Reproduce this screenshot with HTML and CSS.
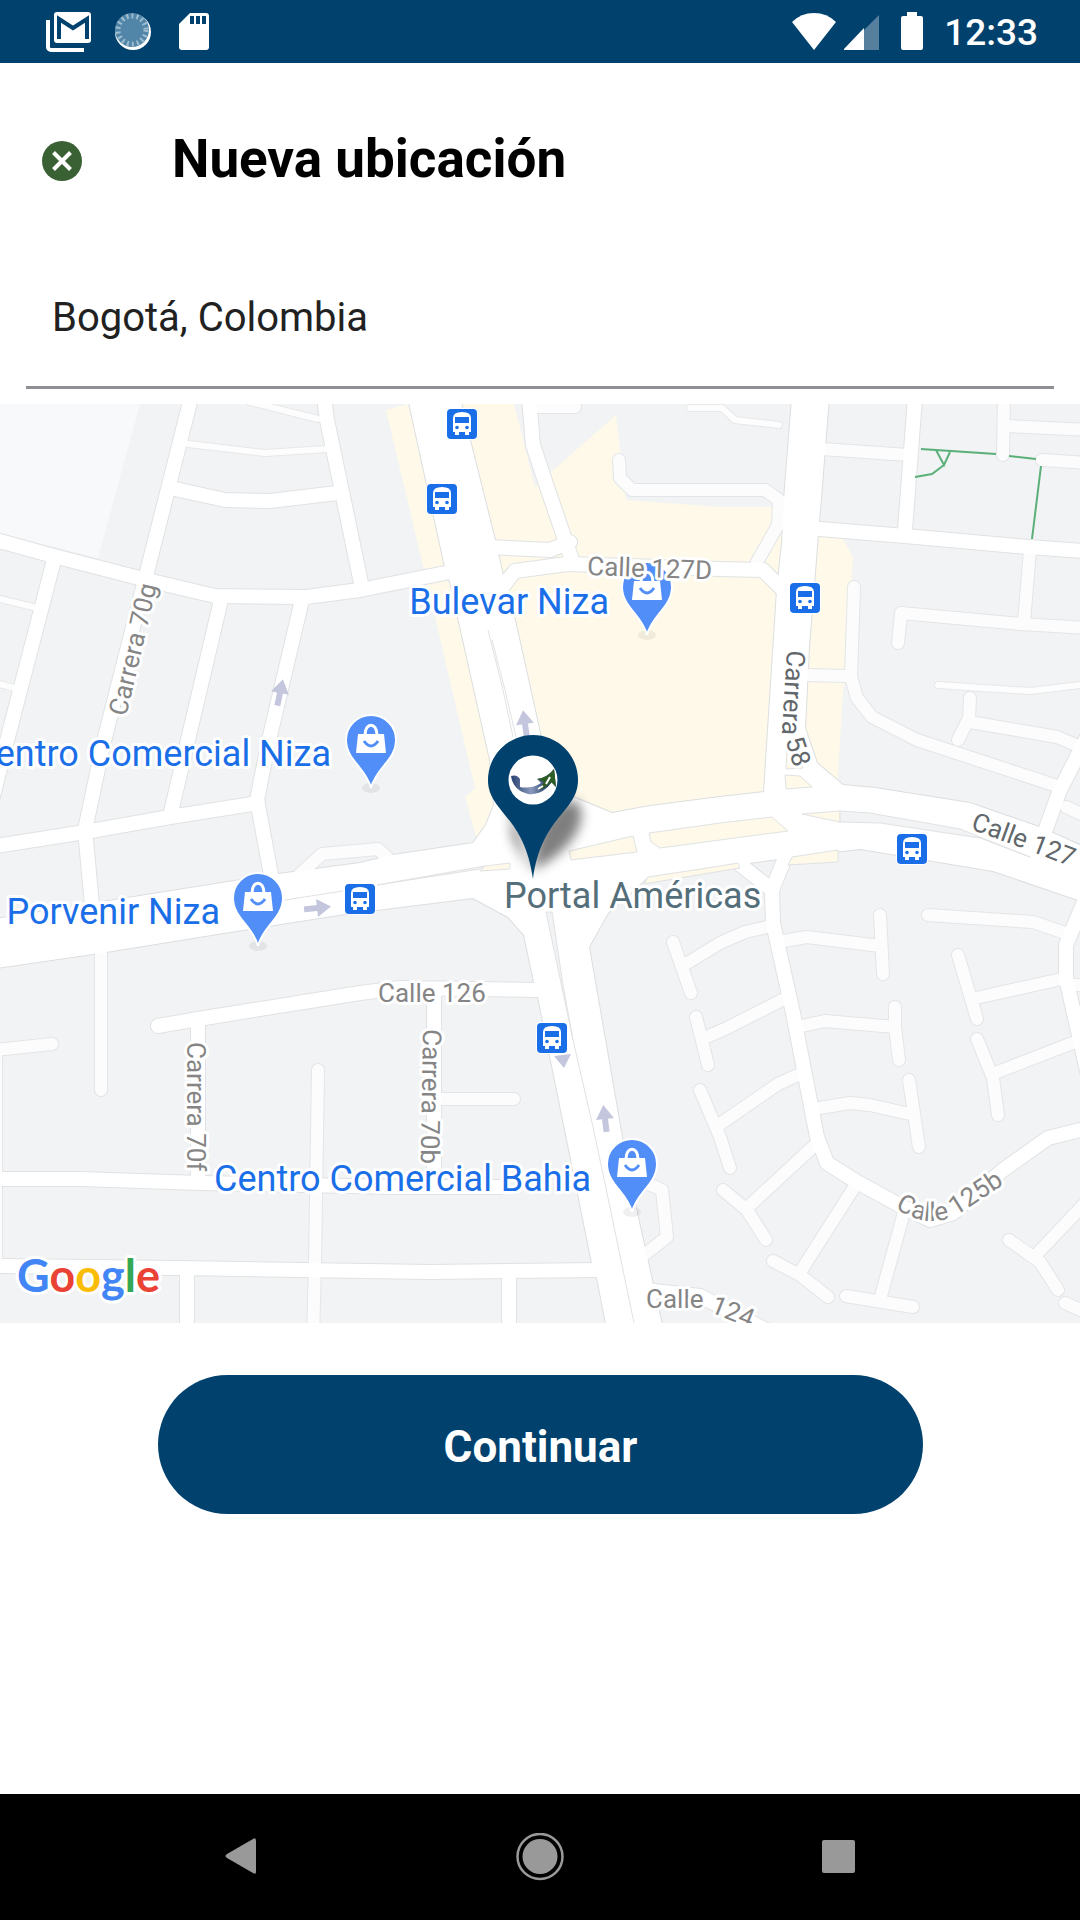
FILE: index.html
```
<!DOCTYPE html>
<html lang="es">
<head>
<meta charset="utf-8">
<meta name="viewport" content="width=device-width, initial-scale=1">
<title>Nueva ubicación</title>
<link rel="stylesheet" href="styles.css">
</head>
<body>
<div class="screen">
  <div class="status-bar">
    <div class="status-group status-left">
      <svg width="46" height="40" viewBox="0 0 46 40" aria-hidden="true">
        <path d="M2 8v27a3 3 0 0 0 3 3h33" fill="none" stroke="#fff" stroke-width="4"/>
        <rect x="8" y="0" width="37" height="31" rx="3" fill="#fff"/>
        <path d="M13 27V7l14 9 14-9v20" fill="none" stroke="#00416d" stroke-width="4"/>
      </svg>
      <svg width="40" height="40" viewBox="3 0 40 40" aria-hidden="true">
        <circle cx="21" cy="20" r="18" fill="#fff"/>
        <circle cx="20" cy="18" r="17" fill="#5286a8"/>
        <circle cx="20" cy="18" r="14" fill="none" stroke="#9dbccf" stroke-width="5" stroke-dasharray="2 3"/>
      </svg>
      <svg width="32" height="40" viewBox="0 0 32 40" aria-hidden="true">
        <path d="M12 1h16a3 3 0 0 1 3 3v31a3 3 0 0 1-3 3H4a3 3 0 0 1-3-3V12z" fill="#fff"/>
        <path d="M14 4v8M20 4v8M26 4v8" stroke="#00416d" stroke-width="4"/>
      </svg>
    </div>
    <div class="status-group status-right">
      <svg width="44" height="40" viewBox="0 0 44 40" aria-hidden="true">
        <path d="M22 38 0 10Q9 1 22 1T44 10z" fill="#fff"/>
      </svg>
      <svg class="signal" width="36" height="40" viewBox="0 0 36 40" aria-hidden="true">
        <path d="M35 3v35H0z" fill="#567f9d"/>
        <path d="M20 16v22H0v-1z" fill="#fff"/>
      </svg>
      <svg width="24" height="40" viewBox="0 0 24 40" aria-hidden="true">
        <path d="M7 0h10v4h4q2 0 2 2v30q0 2-2 2H3q-2 0-2-2V6q0-2 2-2h4z" fill="#fff"/>
      </svg>
      <span class="clock">12:33</span>
    </div>
  </div>

  <header class="header">
    <button class="close" type="button" aria-label="Cerrar">
      <svg width="40" height="40" viewBox="0 0 40 40" aria-hidden="true">
        <circle cx="20" cy="20" r="20" fill="#3a6133"/>
        <path d="M11.500 11.500 28.500 28.500M28.500 11.500 11.500 28.500" stroke="#fff" stroke-width="4"/>
      </svg>
    </button>
    <h1 class="title">Nueva ubicación</h1>
  </header>

  <main>
    <div class="field">
      <input class="place" type="text" value="Bogotá, Colombia" aria-label="Ubicación">
    </div>

    <svg class="map" viewBox="0 404 1080 919" role="img" aria-label="Mapa">
      <defs>
        <g id="wide">
          <path d="M408 398 445 567 450 582 490 760 494 805 486 825 473 843 393 855 360 863 278 874-4 919V968L100 953 230 932 345 914 473 898 508 917 524 935 534 982 538 997 592 1263 597 1278 607 1329H663L637 1213 622 1137 589 947 608 913 648 877 720 867 792 857 860 849 897 855 933 861 993 871 1084 902V847L1053 833 1042 828 970 803 875 788 843 785 817 763 805 728 809 647 829 398H792L784 500 782 543 777 590 764 792 720 797 650 806 612 813 573 797 548 770 540 733 515 620 507 593 495 540 470 440 460 398z"/>
        </g>
        <g id="street">
          <path d="M191 398 145 580 103 745 85 830 92 905"/>
          <path d="M-4 540 50 555 147 580 215 596 306 597 360 590 450 572"/>
          <path d="M175 489 225 500 270 501 337 493"/>
          <path d="M324 398 327 420 341 487 361 583"/>
          <path d="M54 560 22 683 9 733-8 800"/>
          <path d="M221 600 171 812M302 600 269 740 257 800 272 880"/>
          <path d="M-4 846 85 832 170 817 258 803"/>
          <path d="M529 398 533 445 548 490 572 560"/>
          <path d="M490 547 550 550 570 542M500 590 515 571 567 564 720 569 763 570 785 592"/>
          <path d="M820 529 905 536 1028 547 1084 551"/>
          <path d="M915 398 905 530M1088 735 1060 790 1044 834"/>
          <path d="M158 1026 198 1019 360 993 400 988 540 990M198 1020V1182"/>
          <path d="M-4 1179H80L200 1183 400 1187H500M-4 1266 180 1268 430 1272 600 1270"/>
          <path d="M187 1270V1340M509 1274V1340M434 992V1184"/>
          <path d="M732 858 772 890 773 923 793 1013 817 1137 827 1163 857 1182 903 1207 930 1220 953 1213 1003 1170 1048 1138 1088 1128M785 858 772 890"/>
          <path d="M1088 892 1066 945V978L1088 1075"/>
          <path d="M645 1290 700 1296 770 1332"/>
        </g>
        <g id="lane">
          <path d="M300 874 322 854 378 849 392 862M101 940V1090"/>
          <path d="M530 407H575M619 460 620 478 632 490H765L779 500 778 525 757 562"/>
          <path d="M822 449 908 455M1004 398 1003 455M1006 426 1088 430M1042 460 1088 463"/>
          <path d="M1030 550 1024 622M898 643 901 613 1020 624 1088 628"/>
          <path d="M854 587 851 677 857 698 872 717 917 740 987 763 1060 787M803 675 850 676"/>
          <path d="M970 698 969 718 958 740M970 722 1057 737 1088 750M1066 807 1088 817"/>
          <path d="M-4 1050 52 1044M-4 1050V1262M318 1070 315 1262 313 1340M436 1099H514"/>
          <path d="M673 942 691 993M684 965 720 943 745 932 772 926"/>
          <path d="M696 1017 708 1065M704 1038 725 1029 786 998"/>
          <path d="M700 1090 720 1137 730 1168M720 1124 778 1084 798 1075"/>
          <path d="M723 1190 747 1210 766 1240M747 1208 816 1144"/>
          <path d="M777 942 807 937 880 946M880 915 883 974"/>
          <path d="M797 1027 825 1021 895 1027M895 1007V1027L899 1060"/>
          <path d="M813 1109 850 1103 870 1105 914 1115M909 1080 919 1147"/>
          <path d="M928 915 1033 922 1068 934M958 955 977 1019M976 998 1066 978"/>
          <path d="M1066 984 1088 986M977 1039 993 1078 998 1115M995 1073 1080 1040"/>
          <path d="M1009 1240 1040 1262 1058 1290M1035 1256 1088 1200M1065 1303 1090 1314"/>
          <path d="M855 1186 799 1274M773 1261 800 1275 828 1297M903 1216 881 1296M846 1296 913 1307"/>
          <path d="M640 1180 662 1190 667 1237 640 1258"/>
        </g>
        <g id="path">
          <path d="M250 402 318 419M188 444 265 453 327 449M-4 598 37 608M-4 683 14 688"/>
          <path d="M690 408H722L735 420 779 425M938 685 1030 691 1088 684"/>
        </g>
        <g id="poi">
          <ellipse cx="0" cy="48" rx="9" ry="5" fill="#000" opacity=".06"/>
          <path d="M0 48C-5 28-25 20-25 0A25 25 0 0 1 25 0C25 20 5 28 0 48z" fill="#518ef8" stroke="#fff" stroke-width="2"/>
          <path d="M-13-6H13L15 13H-15z" fill="#fff"/>
          <path d="M-6-5C-6-18 6-18 6-5" fill="none" stroke="#fff" stroke-width="3"/>
          <path d="M-7 1Q0 11 7 1" fill="none" stroke="#518ef8" stroke-width="3"/>
        </g>
        <g id="bus">
          <rect x="-16" y="-16" width="32" height="32" rx="5" fill="#fff"/>
          <rect x="-15" y="-15" width="30" height="30" rx="4" fill="#1a6fe8"/>
          <path d="M-9-6Q-9-12 0-12T9-6V8H7V11H3V8H-3V11H-7V8H-9z" fill="#fff"/>
          <path d="M-7-7H7V-1H-7z" fill="#1a6fe8"/>
          <circle cx="-5" cy="3.500" r="1.800" fill="#1a6fe8"/>
          <circle cx="5" cy="3.500" r="1.800" fill="#1a6fe8"/>
        </g>
        <path id="oneway" d="M0-14 9 0H3V13H-3V0H-9z" fill="#c3c6dc"/>
        <filter id="soft" x="-50%" y="-50%" width="200%" height="200%"><feGaussianBlur stdDeviation="6"/></filter>
        <linearGradient id="swoosh"><stop offset="0" stop-color="#27406e"/><stop offset=".45" stop-color="#8b9bbd"/><stop offset=".8" stop-color="#27406e"/></linearGradient>
        <path id="line-70g" d="M126 717 142 650 158 580"/>
        <path id="line-58" d="M787 650 782 732Q790 750 802 800"/>
        <path id="line-127" d="M970 829 1022 848 1090 874"/>
        <path id="line-125b" d="M895 1208Q930 1232 962 1212L1030 1167"/>
        <path id="line-124" d="M646 1308H700L770 1336"/>
      </defs>

      <rect y="404" width="1080" height="919" fill="#f1f3f4"/>
      <path d="M0 404H140L98 558 0 533z" fill="#f8f9fb"/>
      <path d="M386 410 408 404H514L535 487 551 472 616 415 626 500 720 507H775L840 534 853 557 848 670 843 690 838 775V850L650 878H490L475 833 465 797 475 788 424 570z" fill="#fef9e8"/>

      <use href="#path" class="road casing-path"/>
      <use href="#lane" class="road casing-lane"/>
      <use href="#street" class="road casing-street"/>
      <use href="#wide" class="casing-wide"/>
      <use href="#path" class="road fill-path"/>
      <use href="#lane" class="road fill-lane"/>
      <use href="#street" class="road fill-street"/>
      <use href="#wide" class="fill-wide"/>

      <g class="island">
        <path d="M569 851 633 836 637 852 571 860zM649 833 720 823 772 817 788 831 720 840 660 848 651 842z"/>
        <path d="M787 750H797L803 768 786 769zM785 775 800 776 812 787 786 789zM802 814 840 811V822L825 819z"/>
        <path d="M792 857 838 850V862L788 865zM648 877 720 866 738 863 740 868 644 884zM485 866 510 863V869L480 871z"/>
        <path class="block" d="M840 811 870 813 960 829 1030 857 980 838 880 823 840 822z"/>
        <path class="block" d="M377 885 485 866 480 869zM546 912H552L563 985 573 1040z"/>
      </g>
      <path class="median" d="M488 630 503 690 513 737M492 640 505 690 516 737M573 1040 593 1127 607 1193 634 1323M285 900 343 891"/>
      <path class="trail" d="M921 449 996 454M1009 456 1036 459M1041 466 1032 539M936 450 944 465 950 452M944 465 932 474 915 477"/>

      <use href="#oneway" transform="translate(280 693) rotate(12)"/>
      <use href="#oneway" transform="translate(525 724) rotate(-8)"/>
      <use href="#oneway" transform="translate(317 908) rotate(84)"/>
      <use href="#oneway" transform="translate(605 1119) rotate(-7)"/>
      <path d="M554 1056 571 1054 564 1068z" fill="#c3c6dc"/>

      <use href="#bus" x="462" y="424"/>
      <use href="#bus" x="442" y="499"/>
      <use href="#bus" x="805" y="598"/>
      <use href="#bus" x="912" y="849"/>
      <use href="#bus" x="360" y="899"/>
      <use href="#bus" x="552" y="1038"/>
      <use href="#poi" x="647" y="587"/>
      <use href="#poi" x="371" y="740"/>
      <use href="#poi" x="258" y="898"/>
      <use href="#poi" x="632" y="1164"/>

      <g class="label street-label">
        <text><textPath href="#line-70g">Carrera 70g</textPath></text>
        <text transform="translate(187 1042) rotate(90)">Carrera 70f</text>
        <text transform="translate(423 1029) rotate(91)">Carrera 70b</text>
        <text transform="translate(587 575) rotate(2)">Calle 127D</text>
        <text x="378" y="1002">Calle 126</text>
        <text><textPath href="#line-125b">Calle 125b</textPath></text>
        <text><textPath href="#line-124">Calle 124</textPath></text>
      </g>
      <g class="label avenue-label">
        <text><textPath href="#line-58">Carrera 58</textPath></text>
        <text><textPath href="#line-127">Calle 127</textPath></text>
      </g>
      <g class="label place-label">
        <text x="609" y="614" text-anchor="end">Bulevar Niza</text>
        <text x="331" y="766" text-anchor="end">Centro Comercial Niza</text>
        <text x="220" y="924" text-anchor="end">Porvenir Niza</text>
        <text x="591" y="1191" text-anchor="end">Centro Comercial Bahia</text>
        <text class="station" x="504" y="908">Portal Américas</text>
      </g>
      <text class="label google" x="17" y="1292"><tspan fill="#4285f4">G</tspan><tspan fill="#ea4335">o</tspan><tspan fill="#fbbc05">o</tspan><tspan fill="#4285f4">g</tspan><tspan fill="#34a853">l</tspan><tspan fill="#ea4335">e</tspan></text>

      <path d="M533 870C535 835 545 805 575 800 592 815 575 850 533 870zM510 800 512 838 530 870z" fill="#000" opacity=".5" filter="url(#soft)"/>
      <path d="M533 879C524 815 488 812 488 780A45 45 0 0 1 578 780C578 812 542 815 533 879z" fill="#00416d"/>
      <circle cx="533" cy="780" r="24.500" fill="#fff"/>
      <path d="M511 776Q517 774 520 779V787Q532 789 541 783L537 779Q547 778 554 769L556 787 552 782Q542 796 528 794 513 790 511 776z" fill="url(#swoosh)"/>
      <path d="M537 779Q547 778 554 769L556 787 551 782Q546 788 539 790L544 782z" fill="#2d5c24"/>
      <path d="M538 789 543 786M546 784 550 777" stroke="#fff" stroke-width="2"/>
    </svg>

    <div class="actions">
      <button class="continue" type="button">Continuar</button>
    </div>
  </main>

  <nav class="nav-bar" aria-label="Sistema">
    <button class="nav-button" type="button" aria-label="Atrás">
      <svg width="48" height="48" viewBox="0 0 48 48" aria-hidden="true"><path d="M39 8V39Q39 42 36 40L10 25Q7 23 10 21L36 6Q39 4 39 8z" fill="#999"/></svg>
    </button>
    <button class="nav-button" type="button" aria-label="Inicio">
      <svg width="48" height="48" viewBox="0 0 48 48" aria-hidden="true"><circle cx="24" cy="23.500" r="22.500" fill="none" stroke="#999" stroke-width="2.500"/><circle cx="24" cy="23.500" r="17.500" fill="#999"/></svg>
    </button>
    <button class="nav-button" type="button" aria-label="Recientes">
      <svg width="48" height="48" viewBox="0 0 48 48" aria-hidden="true"><rect x="7" y="7" width="33" height="33" rx="2" fill="#999"/></svg>
    </button>
  </nav>
</div>
</body>
</html>
```
FILE: styles.css
```
* {
  box-sizing: border-box;
}

body {
  margin: 0;
  background: #fff;
  color: #000;
  font-family: Roboto, "Liberation Sans", sans-serif;
}

button {
  border: 0;
  padding: 0;
  background: none;
  font: inherit;
  cursor: pointer;
}

svg {
  display: block;
}

.screen {
  display: flex;
  flex-direction: column;
  min-height: 100vh;
}

.status-bar {
  display: flex;
  justify-content: space-between;
  align-items: center;
  height: 63px;
  padding: 0 42px 0 46px;
  background: #00416d;
  color: #fff;
}

.status-group {
  display: flex;
  align-items: center;
}

.status-left {
  gap: 23px;
}

.status-right {
  gap: 8px;
}

.signal {
  margin-right: 12px;
}

.clock {
  margin-left: 12px;
  padding-top: 3px;
  font-size: 37px;
  font-weight: 500;
  line-height: 40px;
}

.header {
  display: flex;
  align-items: center;
  gap: 90px;
  padding: 60px 42px 40px;
}

.close {
  padding-top: 4px;
}

.title {
  margin: 0;
  font-size: 53px;
  font-weight: 700;
  line-height: 72px;
}

.field {
  padding: 0 26px;
}

.place {
  display: block;
  width: 100%;
  height: 154px;
  margin-bottom: 15px;
  padding: 14px 26px 0;
  border: 0;
  border-bottom: 3px solid #8e9093;
  background: none;
  color: #212121;
  font: 400 40px/48px Roboto, "Liberation Sans", sans-serif;
  outline: 0;
}

.map {
  width: 100%;
  height: auto;
}

.road {
  fill: none;
  stroke-linejoin: round;
  stroke-linecap: round;
}

.casing-path { stroke: #e6e8ea; stroke-width: 8px; }
.casing-lane { stroke: #e3e5e8; stroke-width: 14px; }
.casing-street { stroke: #e0e2e4; stroke-width: 16px; }
.casing-wide { fill: none; stroke: #dcdee0; stroke-width: 2px; }
.fill-path { stroke: #fdfdfd; stroke-width: 6px; }
.fill-lane { stroke: #fcfcfd; stroke-width: 12px; }
.fill-street { stroke: #fff; stroke-width: 14px; }
.fill-wide { fill: #fff; }

.island {
  fill: #fef9e8;
  stroke: #e0e2e4;
}

.block {
  fill: #f1f3f4;
}

.median {
  fill: none;
  stroke: #e0e2e4;
}

.trail {
  fill: none;
  stroke: #5bb07a;
  stroke-width: 2px;
}

.label {
  paint-order: stroke;
  stroke: #fff;
  stroke-width: 6px;
  stroke-linejoin: round;
}

.street-label {
  fill: #858585;
  font-size: 26px;
}

.avenue-label {
  fill: #62676b;
  font-size: 26px;
}

.place-label {
  fill: #1a6fe8;
  font-size: 36px;
}

.station {
  fill: #546e7a;
}

.google {
  font-family: Lato, sans-serif;
  font-size: 45px;
  font-weight: 700;
}

.actions {
  display: flex;
  justify-content: center;
  padding: 52px 157px 52px 158px;
}

.continue {
  flex: 1;
  height: 139px;
  padding-top: 4px;
  border-radius: 70px;
  background: #00416d;
  color: #fff;
  font-size: 44px;
  font-weight: 700;
}

.nav-bar {
  display: flex;
  margin-top: auto;
  height: 126px;
  padding: 0 92px;
  background: #000;
}

.nav-button {
  display: flex;
  flex: 1;
  align-items: center;
  justify-content: center;
}
```
